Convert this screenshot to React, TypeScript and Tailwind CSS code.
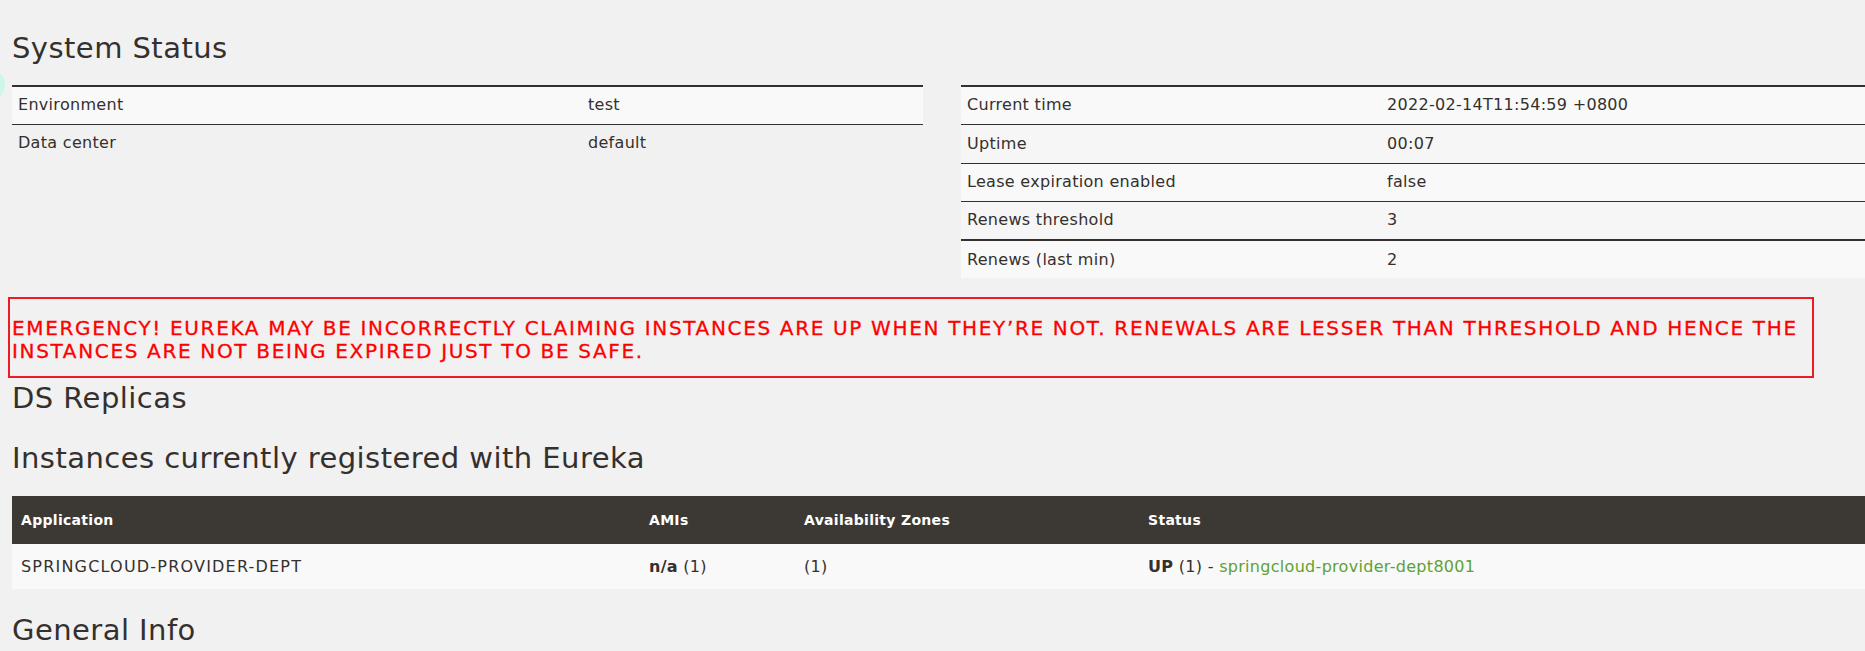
const heading = "text-[29px] leading-[34px] tracking-[0.45px] text-[#34302d] font-['DejaVu_Sans',sans-serif]"

const leftRows = [
  ["Environment", "test"],
  ["Data center", "default"],
]

const rightRows = [
  ["Current time", "2022-02-14T11:54:59 +0800"],
  ["Uptime", "00:07"],
  ["Lease expiration enabled", "false"],
  ["Renews threshold", "3"],
  ["Renews (last min)", "2"],
]

export default function App() {
  return (
    <main className="relative min-h-[651px] w-full overflow-hidden bg-[#f1f1f1] pl-[12px] pt-[31px] text-[16px] text-[#34302d] font-['DejaVu_Sans',sans-serif]">
      <div className="absolute left-[-29px] top-[68px] h-[34px] w-[34px] rounded-full bg-[#cef6ea]"></div>

      <h2 className={heading}>System Status</h2>

      <div className="mt-[20px] flex items-start gap-[38px]">
        <table className="w-[911px] border-t-2 border-[#34302d] tracking-[0.3px]">
          <tbody>
            {leftRows.map(([k, v], i) => (
              <tr key={k} className={i === 0 ? "h-[38px] border-b border-[#34302d] bg-[#f9f9f9]" : "h-[38px]"}>
                <td className="w-[570px] px-[6px]">{k}</td>
                <td className="px-[6px]">{v}</td>
              </tr>
            ))}
          </tbody>
        </table>

        <table className="flex-1 border-t-2 border-[#34302d] tracking-[0.3px]">
          <tbody>
            {rightRows.map(([k, v], i) => (
              <tr
                key={k}
                className={
                  i === 4
                    ? "h-[38px] bg-[#f9f9f9]"
                    : i === 3
                    ? "h-[39px] border-b-2 border-[#34302d] bg-[#f6f6f6]"
                    : i % 2 === 0
                    ? "h-[38px] border-b border-[#34302d] bg-[#f9f9f9]"
                    : "h-[39px] border-b border-[#34302d] bg-[#f6f6f6]"
                }
              >
                <td className="w-[420px] px-[6px]">{k}</td>
                <td className="px-[6px]">{v}</td>
              </tr>
            ))}
          </tbody>
        </table>
      </div>

      <div className="ml-[-4px] mt-[19px] w-[1806px] border-2 border-[#ed1c24] pb-[13px] pl-[2px] pt-[18px]">
        <h4 className="whitespace-nowrap text-[20px] leading-[23px] tracking-[1.66px] text-[#ff0000] [-webkit-text-stroke:0.3px_#ff0000]">
          EMERGENCY! EUREKA MAY BE INCORRECTLY CLAIMING INSTANCES ARE UP WHEN THEY’RE NOT. RENEWALS ARE LESSER THAN THRESHOLD AND HENCE THE
          <br />
          INSTANCES ARE NOT BEING EXPIRED JUST TO BE SAFE.
        </h4>
      </div>

      <h2 className={`mt-[3px] ${heading}`}>DS Replicas</h2>

      <h2 className={`mt-[26px] ${heading}`}>Instances currently registered with Eureka</h2>

      <table className="mt-[21px] w-full tracking-[0.3px]">
        <thead>
          <tr className="h-[48px] bg-[#3c3935] text-left text-[14px] font-bold text-white">
            <th className="w-[628px] px-[9px]">Application</th>
            <th className="w-[155px] px-[9px]">AMIs</th>
            <th className="w-[344px] px-[9px]">Availability Zones</th>
            <th className="px-[9px]">Status</th>
          </tr>
        </thead>
        <tbody>
          <tr className="h-[45px] bg-[#f9f9f9]">
            <td className="px-[9px] tracking-[1.2px]">SPRINGCLOUD-PROVIDER-DEPT</td>
            <td className="px-[9px]">
              <b>n/a</b> (1)
            </td>
            <td className="px-[9px]">(1)</td>
            <td className="px-[9px]">
              <b>UP</b> (1) - <a className="text-[#5fa134]">springcloud-provider-dept8001</a>
            </td>
          </tr>
        </tbody>
      </table>

      <h2 className={`mt-[24px] ${heading}`}>General Info</h2>
    </main>
  )
}
